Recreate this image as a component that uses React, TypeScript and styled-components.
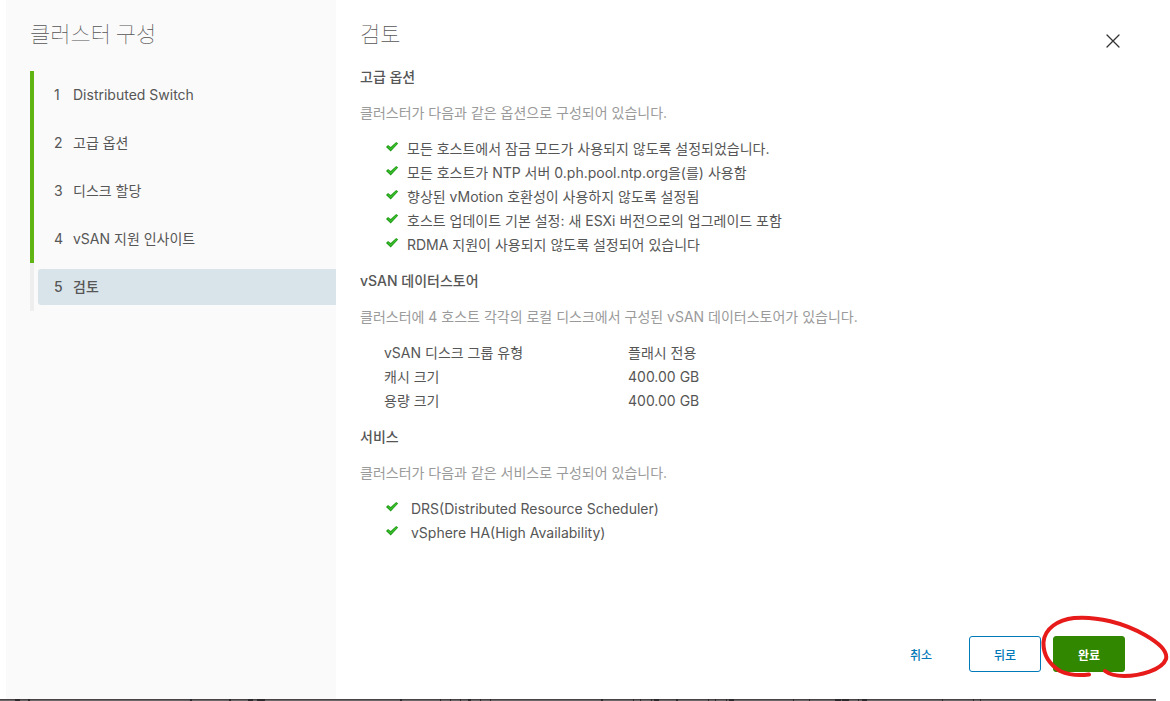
import React from 'react';
import styled, { createGlobalStyle } from 'styled-components';

const GlobalStyle = createGlobalStyle`
  * {
    box-sizing: border-box;
  }
  body {
    margin: 0;
    background: #fff;
    color: #565656;
    font-family: Inter, 'Noto Sans CJK KR', sans-serif;
    font-size: 14px;
    line-height: 24px;
  }
`;

const Page = styled.div`
  display: flex;
  flex-direction: column;
  min-height: 100vh;
  overflow: hidden;
`;

const Wizard = styled.div`
  flex: 1;
  display: flex;
  margin: 0 21px 0 6px;
`;

const Sidebar = styled.nav`
  flex: 0 0 330px;
  padding: 14px 0 24px 24px;
  background: #fafafa;
`;

const Title = styled.h1`
  margin: 0;
  color: #565656;
  font-family: 'Noto Sans CJK KR', sans-serif;
  font-size: 22px;
  font-weight: 100;
  line-height: 36px;
`;

const Steps = styled.ol`
  list-style: none;
  margin: 21px 0 0;
  padding: 0;
`;

const Step = styled.li<{ $done?: boolean }>`
  height: 48px;
  padding: 6px 0 6px 4px;
  border-left: 4px solid ${(p) => (p.$done ? '#60b515' : '#eee')};
`;

const StepButton = styled.button<{ $active?: boolean }>`
  display: flex;
  align-items: center;
  gap: 8px;
  width: 100%;
  height: 36px;
  padding: 0 16px;
  border: 0;
  border-radius: 3px 0 0 3px;
  background: ${(p) => (p.$active ? '#d9e4ea' : 'transparent')};
  color: inherit;
  font: inherit;
  font-weight: ${(p) => (p.$active ? 500 : 400)};
  text-align: left;
  cursor: pointer;
`;

const StepNumber = styled.span`
  width: 11px;
`;

const Main = styled.main`
  flex: 1;
  display: flex;
  flex-direction: column;
  padding: 14px 24px 27px;
`;

const Header = styled.header`
  display: flex;
  justify-content: space-between;
  align-items: flex-start;
  margin-bottom: 12px;
`;

const CloseButton = styled.button`
  display: flex;
  margin-top: 15px;
  padding: 4px;
  border: 0;
  background: none;
  color: #333;
  cursor: pointer;
`;

const Body = styled.div`
  flex: 1;
  display: flex;
  flex-direction: column;
  gap: 12px;
`;

const Section = styled.section`
  display: flex;
  flex-direction: column;
  gap: 12px;
`;

const Heading = styled.h2`
  margin: 0;
  font-size: 14px;
  font-weight: 500;
  line-height: 24px;
`;

const Lead = styled.p`
  margin: 0;
  color: #9a9a9a;
`;

const CheckList = styled.ul`
  list-style: none;
  margin: 0;
  padding: 0 0 0 26px;
`;

const CheckItem = styled.li<{ $gap: number }>`
  display: flex;
  align-items: flex-start;
  gap: ${(p) => p.$gap}px;

  svg {
    flex: none;
    margin-top: 4px;
  }
`;

const Facts = styled.table`
  margin-left: 24px;
  border-collapse: collapse;
  text-align: left;

  th,
  td {
    padding: 0;
    font-weight: 400;
  }
  th {
    width: 244px;
  }
`;

const Footer = styled.footer`
  display: flex;
  justify-content: flex-end;
  gap: 12px;
`;

const Button = styled.button<{ $kind: 'link' | 'outline' | 'success' }>`
  width: 72px;
  height: 36px;
  padding: 0;
  border: 1px solid
    ${(p) => ({ link: 'transparent', outline: '#0079b8', success: '#318700' })[p.$kind]};
  border-radius: 3px;
  background: ${(p) => (p.$kind === 'success' ? '#318700' : 'transparent')};
  color: ${(p) => (p.$kind === 'success' ? '#fff' : '#0079b8')};
  font-family: inherit;
  font-size: 12px;
  font-weight: ${(p) => (p.$kind === 'success' ? 700 : 500)};
  cursor: pointer;
`;

const Marked = styled.div`
  position: relative;
`;

const Scribble = styled.svg`
  position: absolute;
  left: -13px;
  top: -22px;
  pointer-events: none;
`;

const Backdrop = styled.div`
  height: 2px;
  margin-right: 14px;
  background: linear-gradient(#484446 50%, #6b6769 50%);

  svg {
    display: block;
    width: 100%;
    height: 2px;
  }
`;

const Check = () => (
  <svg width="13" height="12" viewBox="0 0 13 12" aria-hidden="true">
    <path d="M0 5.900 2 3.900 4.700 6.100 10.200 0.900 12.200 2.600 4.700 10.400Z" fill="#259b1c" />
    <path d="M1.600 5.800 2.300 5.100 4.700 7.400 10.200 2.100 11 2.700 4.700 9Z" fill="#3cc52b" />
  </svg>
);

const steps = ['Distributed Switch', '고급 옵션', '디스크 할당', 'vSAN 지원 인사이트', '검토'];

const options = [
  '모든 호스트에서 잠금 모드가 사용되지 않도록 설정되었습니다.',
  '모든 호스트가 NTP 서버 0.ph.pool.ntp.org을(를) 사용함',
  '향상된 vMotion 호환성이 사용하지 않도록 설정됨',
  '호스트 업데이트 기본 설정: 새 ESXi 버전으로의 업그레이드 포함',
  'RDMA 지원이 사용되지 않도록 설정되어 있습니다',
];

const facts = [
  ['vSAN 디스크 그룹 유형', '플래시 전용'],
  ['캐시 크기', '400.00 GB'],
  ['용량 크기', '400.00 GB'],
];

const services = ['DRS(Distributed Resource Scheduler)', 'vSphere HA(High Availability)'];

const specks: [number, number][] = [
  [15, 5], [28, 2], [190, 2], [229, 2], [248, 5], [257, 8], [400, 2], [440, 1], [450, 1],
  [460, 1], [468, 3], [480, 1], [490, 1], [601, 2], [633, 1], [640, 1], [651, 1], [654, 5],
  [676, 2], [708, 1], [715, 1], [726, 1], [729, 5], [793, 1], [809, 1], [835, 6], [842, 7],
  [858, 1], [862, 5], [942, 1], [973, 1], [980, 1],
];

export default function App() {
  return (
    <Page>
      <GlobalStyle />
      <Wizard>
        <Sidebar>
          <Title>클러스터 구성</Title>
          <Steps>
            {steps.map((label, i) => {
              const active = i === steps.length - 1;
              return (
                <Step key={label} $done={!active}>
                  <StepButton type="button" $active={active} aria-current={active ? 'step' : undefined}>
                    <StepNumber>{i + 1}</StepNumber>
                    <span>{label}</span>
                  </StepButton>
                </Step>
              );
            })}
          </Steps>
        </Sidebar>
        <Main>
          <Header>
            <Title as="h2">검토</Title>
            <CloseButton type="button" aria-label="닫기">
              <svg width="16" height="16" viewBox="0 0 16 16" stroke="currentColor" strokeWidth="1.3" strokeLinecap="round">
                <path d="M2 2 14 14M14 2 2 14" />
              </svg>
            </CloseButton>
          </Header>
          <Body>
            <Section>
              <Heading>고급 옵션</Heading>
              <Lead>클러스터가 다음과 같은 옵션으로 구성되어 있습니다.</Lead>
              <CheckList>
                {options.map((text) => (
                  <CheckItem key={text} $gap={8}>
                    <Check />
                    <span>{text}</span>
                  </CheckItem>
                ))}
              </CheckList>
            </Section>
            <Section>
              <Heading>vSAN 데이터스토어</Heading>
              <Lead>클러스터에 4 호스트 각각의 로컬 디스크에서 구성된 vSAN 데이터스토어가 있습니다.</Lead>
              <Facts>
                <tbody>
                  {facts.map(([name, value]) => (
                    <tr key={name}>
                      <th scope="row">{name}</th>
                      <td>{value}</td>
                    </tr>
                  ))}
                </tbody>
              </Facts>
            </Section>
            <Section>
              <Heading>서비스</Heading>
              <Lead>클러스터가 다음과 같은 서비스로 구성되어 있습니다.</Lead>
              <CheckList>
                {services.map((text) => (
                  <CheckItem key={text} $gap={12}>
                    <Check />
                    <span>{text}</span>
                  </CheckItem>
                ))}
              </CheckList>
            </Section>
          </Body>
          <Footer>
            <Button type="button" $kind="link">취소</Button>
            <Button type="button" $kind="outline">뒤로</Button>
            <Marked>
              <Button type="button" $kind="success">완료</Button>
              <Scribble width="130" height="66" viewBox="0 0 130 66" fill="none" aria-hidden="true">
                <path
                  d="M49 60.500C38 62 29 61 20 57C9 50 3 40 3.500 28C5 14 18 6 34 4C57 2 84 9 105 21C119 29 128 37 126 45C122 56 100 62 84 62C76 62 69 60 65 57"
                  stroke="#e81b1b"
                  strokeWidth="4"
                  strokeLinecap="round"
                  strokeLinejoin="round"
                />
              </Scribble>
            </Marked>
          </Footer>
        </Main>
      </Wizard>
      <Backdrop>
        <svg viewBox="0 0 1156 2" preserveAspectRatio="none" aria-hidden="true">
          {specks.map(([x, w]) => (
            <rect key={x} x={x} y="0" width={w} height="2" fill="#2c2a2c" />
          ))}
        </svg>
      </Backdrop>
    </Page>
  );
}
